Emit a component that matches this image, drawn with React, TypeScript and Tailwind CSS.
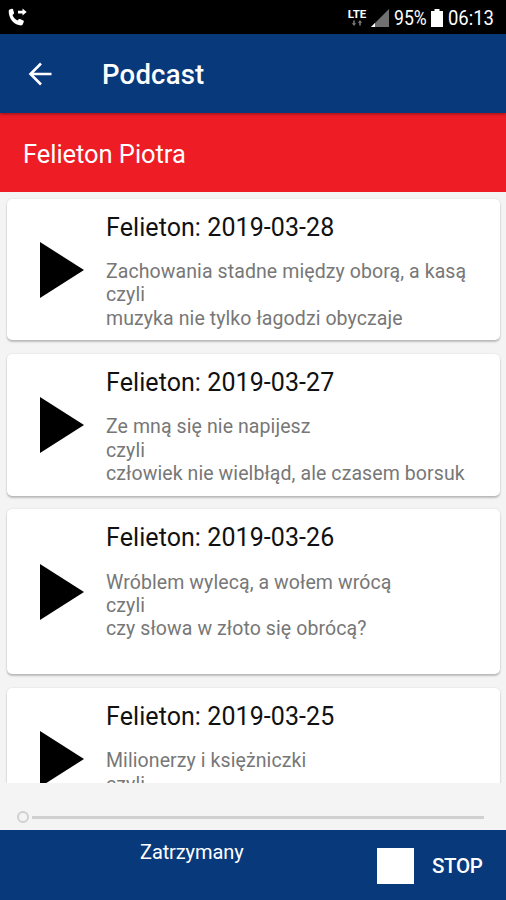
const episodes = [
    {
        date: "2019-03-28",
        lines: [
            "Zachowania stadne między oborą, a kasą",
            "czyli",
            "muzyka nie tylko łagodzi obyczaje",
        ],
    },
    {
        date: "2019-03-27",
        lines: [
            "Ze mną się nie napijesz",
            "czyli",
            "człowiek nie wielbłąd, ale czasem borsuk",
        ],
    },
    {
        date: "2019-03-26",
        lines: [
            "Wróblem wylecą, a wołem wrócą",
            "czyli",
            "czy słowa w złoto się obrócą?",
            "",
        ],
    },
    {
        date: "2019-03-25",
        lines: ["Milionerzy i księżniczki", "czyli", ""],
    },
];

function StatusBar() {
    return (
        <div className="flex h-[34px] shrink-0 items-center bg-black pr-[11px] pl-2 text-white">
            <svg
                viewBox="0 0 20 20"
                className="mt-0.5 h-5 w-5"
                fill="currentColor"
            >
                <path d="M1.2 1.800 3.800.8c.6-.2 1 0 1.200.5l1 3.400c.2.500 0 .9-.4 1.200L4.500 7.100c.9 2.400 2.700 4.300 5 5.300l1.200-1.100c.4-.4.8-.4 1.300-.2l3.300 1.500c.5.3.7.7.5 1.200l-1 2.500c-.3.7-.8 1.100-1.600 1.100C6.300 17.400.8 11 .7 3.500c0-.7.1-1.400.5-1.700Z" />
                <path d="M10 2.700h4.500V.6l4.200 3.500-4.200 3.500V5.500H10z" />
            </svg>
            <div className="ml-auto flex h-full items-center">
                <div className="mr-[4px] flex w-5 flex-col items-center">
                    <span className="text-[11.5px] leading-[11px] font-bold">
                        LTE
                    </span>
                    <svg
                        viewBox="0 0 12 6"
                        className="h-1.5 w-3"
                        fill="#777777"
                    >
                        <path d="M3 6 .8 3.200h1.400V.5h1.600v2.700h1.400zM9 0l2.200 2.800H9.800v2.700H8.200V2.800H6.800z" />
                    </svg>
                </div>
                <svg
                    viewBox="0 0 18 18"
                    className="mt-0.5 mr-[5px] h-[18px] w-[18px]"
                >
                    <path d="M18 0v18H0z" fill="#707070" />
                    <path d="M4 14v4H0z" fill="#ffffff" />
                </svg>
                <span className="mt-[3px] w-[35px] origin-left scale-x-[0.86] text-[20.5px] whitespace-nowrap">
                    95%
                </span>
                <svg
                    viewBox="0 0 12 18"
                    className="mt-px mr-[5px] ml-[2px] h-[18px] w-3"
                    fill="currentColor"
                >
                    <path d="M3.500 0h5v2H12v16H0V2h3.500z" />
                </svg>
                <span className="mt-[3px] w-[47px] origin-left scale-x-[0.9] text-[20.5px] whitespace-nowrap">
                    06:13
                </span>
            </div>
        </div>
    );
}

function Episode({ date, lines }: { date: string; lines: string[] }) {
    return (
        <div className="flex shrink-0 items-center rounded-[5px] bg-white pb-[10.5px] pl-[33px] shadow-[0_2px_2px_rgba(0,0,0,0.22),0_0_2px_rgba(0,0,0,0.12)]">
            <svg viewBox="0 0 44 56" className="mt-[11px] h-14 w-11">
                <path d="M0 0 44 28 0 56z" />
            </svg>
            <div className="ml-[22px] pt-[14px]">
                <h2 className="text-[25px] leading-[29px] tracking-[0.08px] whitespace-nowrap text-[#111111]">
                    Felieton: {date}
                </h2>
                <div className="mt-[18.5px] text-[19.5px] leading-[23.3px] tracking-[0.09px] whitespace-nowrap text-[#777777]">
                    {lines.map((line, index) => (
                        <p key={index} className="min-h-[23.3px]">
                            {line}
                        </p>
                    ))}
                </div>
            </div>
        </div>
    );
}

export default function App() {
    return (
        <div className="flex h-[900px] w-[506px] flex-col overflow-hidden bg-[#f4f4f4] font-[Roboto,sans-serif]">
            <StatusBar />
            <header className="z-10 flex h-[79px] shrink-0 items-center bg-[#08397b] pl-7 text-white shadow-[0_1px_3px_rgba(0,0,0,0.4)]">
                <svg
                    viewBox="0 0 24 24"
                    className="h-6 w-6"
                    fill="none"
                    stroke="currentColor"
                    strokeWidth="2.600"
                >
                    <path d="M23.500 12H2.500M13 1.500 2.500 12 13 22.500" />
                </svg>
                <h1 className="ml-[50px] pt-[3px] text-[27.5px] font-medium tracking-[0.2px]">
                    Podcast
                </h1>
            </header>
            <div className="flex h-[78.500px] shrink-0 items-center bg-[#ee1c25] pt-[3px] pl-[23px] text-[25.5px] tracking-[-0.05px] text-white">
                Felieton Piotra
            </div>
            <main className="flex h-[591px] shrink-0 flex-col gap-[13.5px] overflow-hidden pt-[7px] pr-1.5 pl-[7px]">
                {episodes.map((episode) => (
                    <Episode key={episode.date} {...episode} />
                ))}
            </main>
            <div className="flex h-[47.500px] shrink-0 items-center pt-[22px] pr-[22px] pl-[17px]">
                <div className="h-3 w-3 rounded-full border-2 border-[#d0d0d0]" />
                <div className="ml-[3px] h-[3px] flex-1 bg-[#d0d0d0]" />
            </div>
            <footer className="flex h-[70px] shrink-0 bg-[#08397b] text-white">
                <div className="w-[377px] pt-[10px] pl-[140px] text-[20px] leading-6 tracking-[-0.1px]">
                    Zatrzymany
                </div>
                <div className="mt-[17.500px] h-9 w-[37px] bg-white" />
                <button className="ml-[18px] h-[70px] pt-[3px] text-[20.5px] font-medium tracking-[-0.3px]">
                    STOP
                </button>
            </footer>
        </div>
    );
}
